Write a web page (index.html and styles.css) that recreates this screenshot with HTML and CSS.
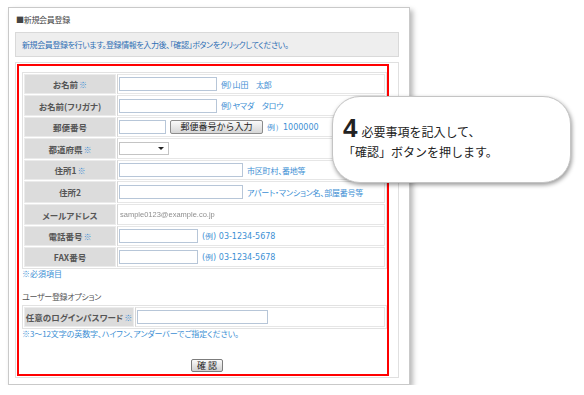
FILE: index.html
```html
<!DOCTYPE html>
<html lang="ja">
<head>
<meta charset="utf-8">
<title>新規会員登録</title>
<link rel="stylesheet" href="styles.css">
</head>
<body>
<div class="panel">
  <div class="title">■新規会員登録</div>
  <div class="info">新規会員登録を行います。登録情報を入力後、「確認」ボタンをクリックしてください。</div>
  <div class="form">
    <table class="tbl">
      <tr class="h20"><th>お名前<span class="req">※</span></th><td><input class="in w98" type="text"><span class="ex">例）山田　太郎</span></td></tr>
      <tr class="h21"><th>お名前(フリガナ)</th><td><input class="in w98" type="text"><span class="ex">例）ヤマダ　タロウ</span></td></tr>
      <tr class="h20"><th>郵便番号</th><td><input class="in w47" type="text"><button class="zip" type="button">郵便番号から入力</button><span class="ex num">例）1000000</span></td></tr>
      <tr class="h21"><th>都道府県<span class="req">※</span></th><td><span class="select"><span class="arrow"></span></span></td></tr>
      <tr class="h20"><th>住所1<span class="req">※</span></th><td><input class="in w124" type="text"><span class="ex">市区町村、番地等</span></td></tr>
      <tr class="h22"><th>住所2</th><td><input class="in w124" type="text"><span class="ex">アパート・マンション名、部屋番号等</span></td></tr>
      <tr class="h21"><th>メールアドレス</th><td><span class="mail">sample0123@example.co.jp</span></td></tr>
      <tr class="h20"><th>電話番号<span class="req">※</span></th><td><input class="in w79" type="text"><span class="ex num">(例) 03-1234-5678</span></td></tr>
      <tr class="h20"><th>FAX番号</th><td><input class="in w79" type="text"><span class="ex num">(例) 03-1234-5678</span></td></tr>
    </table>
    <p class="note">※必須項目</p>
    <p class="sub">ユーザー登録オプション</p>
    <table class="tbl tbl2">
      <tr class="h20"><th>任意のログインパスワード<span class="req">※</span></th><td><input class="in w131" type="text"></td></tr>
    </table>
    <p class="note note2">※3～12文字の英数字、ハイフン、アンダーバーでご指定ください。</p>
    <div class="submit"><button class="btn" type="button">確 認</button></div>
    <div class="redbox"></div>
  </div>
</div>
<div class="callout">
  <div class="line1"><span class="step">4</span><span class="lt">必要事項を記入して、</span></div>
  <div class="line2">「確認」ボタンを押します。</div>
</div>
</body>
</html>
```
FILE: styles.css
```css
* { box-sizing: border-box; }
body {
  margin: 0;
  background: #fff;
  font-family: "Noto Sans CJK JP", "Liberation Sans", sans-serif;
  font-feature-settings: "palt" 1;
  color: #555;
}
.panel {
  margin: 7px 0 0 8px;
  width: 402px;
  height: 378px;
  border: 1px solid #c9c9c9;
  background: #fff;
  box-shadow: 3px 3px 5px rgba(0,0,0,0.28);
  padding: 5px 10px 0 6px;
}
.title {
  font-size: 8px;
  letter-spacing: -0.3px;
  line-height: 14px;
  color: #444;
  padding-left: 1px;
}
.info {
  margin-top: 5px;
  height: 25px;
  border: 1px solid #d9d9d9;
  background: #eeeeee;
  color: #2e6fb5;
  font-size: 8px;
  letter-spacing: -0.4px;
  line-height: 23px;
  padding-left: 6px;
}
.form {
  position: relative;
  margin-top: 5px;
  width: 384px;
  height: 316px;
  border: 1px solid #e0e0e0;
  padding: 9px 0 0 6px;
}
.tbl {
  width: 365px;
  table-layout: fixed;
  border: 1px solid #e2e2e2;
  border-spacing: 1px;
  background: #fff;
}
.tbl th {
  width: 92px;
  padding: 0;
  background: #dcdcdc;
  border: 1px solid #ebebeb;
  font-size: 8.5px;
  font-weight: bold;
  color: #555;
  text-align: center;
  white-space: nowrap;
}
.tbl2 th { width: 110px; }
.tbl td {
  padding: 0 0 0 1px;
  border: 1px solid #e6e6e6;
  border-left-color: #d6d6d6;
  white-space: nowrap;
  vertical-align: middle;
  font-size: 0;
}
.tbl2 td { padding-left: 1px; }
.h20 { height: 20px; }
.h21 { height: 21px; }
.h22 { height: 22px; }
.req {
  color: #3d8fd4;
  font-size: 8px;
  margin-left: 1px;
  font-weight: normal;
}
.in {
  height: 14px;
  border: 1px solid #b7c6d8;
  padding: 0;
  margin: 0;
  background: #fff;
  vertical-align: middle;
}
.w98 { width: 98px; }
.w47 { width: 47px; }
.w124 { width: 124px; }
.w79 { width: 79px; }
.w131 { width: 131px; }
.ex {
  color: #3d8fd4;
  font-size: 8px;
  letter-spacing: -0.2px;
  margin-left: 4px;
  vertical-align: middle;
}
.ex.num { font-family: "DejaVu Sans", sans-serif; font-size: 8px; letter-spacing: 0; }
.zip {
  margin: 0 0 0 4px;
  width: 93px;
  height: 14px;
  padding: 0;
  border: 1px solid #8c8c8c;
  border-radius: 2px;
  background: linear-gradient(#fafafa, #d6d6d6);
  color: #222;
  font-family: "Noto Sans CJK JP", sans-serif;
  font-size: 9px;
  line-height: 12px;
  vertical-align: middle;
}
.select {
  display: inline-block;
  position: relative;
  width: 50px;
  height: 13px;
  border: 1px solid #c4c4c4;
  background: #fff;
  vertical-align: middle;
}
.arrow {
  position: absolute;
  right: 4px;
  top: 4px;
  border-left: 3px solid transparent;
  border-right: 3px solid transparent;
  border-top: 3px solid #222;
}
.mail {
  font-family: "Liberation Sans", sans-serif;
  font-size: 7.5px;
  color: #8f8f8f;
  filter: blur(0.7px);
  margin-left: 1px;
  vertical-align: middle;
}
.note {
  margin: 0;
  font-size: 8px;
  line-height: 10px;
  color: #3d8fd4;
}
.note2 { font-size: 8px; letter-spacing: -0.1px; }
.sub {
  margin: 12px 0 2px;
  font-size: 8px;
  letter-spacing: -0.3px;
  line-height: 12px;
  color: #555;
}
.submit {
  width: 370px;
  margin-top: 20px;
  display: flex;
  justify-content: center;
}
.btn {
  width: 32px;
  height: 13px;
  padding: 0;
  border: 1px solid #7c7c7c;
  border-radius: 2px;
  background: linear-gradient(#fafafa, #d0d0d0);
  color: #222;
  font-family: "Noto Sans CJK JP", sans-serif;
  font-size: 9px;
  line-height: 11px;
}
.redbox {
  position: absolute;
  left: 1px;
  top: 1px;
  width: 372px;
  height: 312px;
  border: 2px solid #ff0000;
  pointer-events: none;
}
.callout {
  position: absolute;
  left: 332px;
  top: 96px;
  width: 239px;
  height: 87px;
  border: 1px solid #c4c4c4;
  border-radius: 28px;
  background: #fff;
  box-shadow: 1px 2px 4px rgba(0,0,0,0.4);
  padding: 17px 0 0 10px;
  color: #222;
  font-feature-settings: normal;
}
.line1 {
  height: 28px;
  line-height: 28px;
  white-space: nowrap;
}
.step {
  font-family: "Liberation Sans", sans-serif;
  font-weight: bold;
  font-size: 26px;
  margin-right: 4px;
}
.lt { font-size: 12px; }
.line2 {
  margin-top: 2px;
  font-size: 12px;
  line-height: 16px;
  white-space: nowrap;
}
```
